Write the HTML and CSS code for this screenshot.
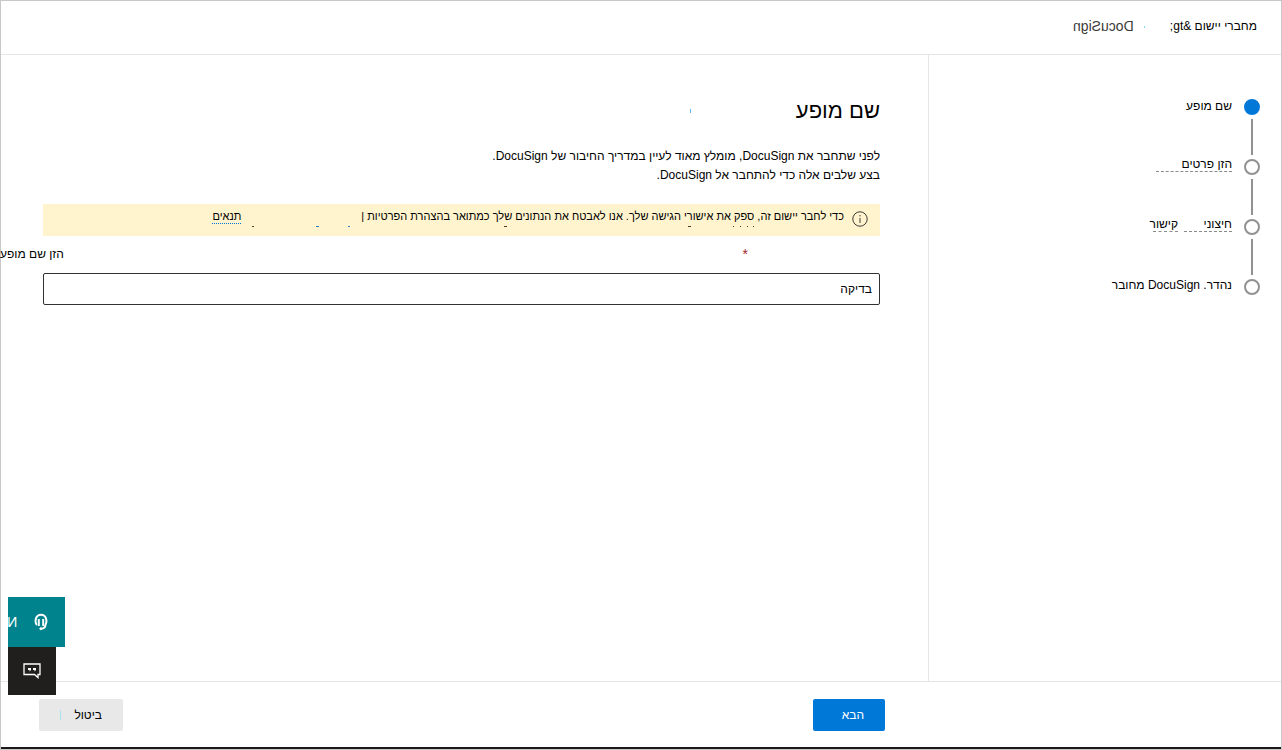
FILE: index.html
```html
<!DOCTYPE html>
<html lang="he" dir="rtl">
<head>
<meta charset="utf-8">
<title>DocuSign</title>
<link rel="stylesheet" href="styles.css">
</head>
<body>
<div class="page">
  <header class="header">
    <span class="crumb">מחברי יישום &amp;gt;</span>
    <span class="tick tick-dot"></span>
    <span class="product mirrored" dir="ltr">DocuSign</span>
  </header>
  <div class="body">
    <nav class="sidebar">
      <ol class="steps">
        <li class="step current"><span class="marker"></span><span class="step-name">שם מופע</span></li>
        <li class="step"><span class="marker"></span><span class="step-name trace">הזן פרטים</span></li>
        <li class="step"><span class="marker"></span><span class="step-name trace">חיצוני</span><span class="step-name trace trace-short">קישור</span></li>
        <li class="step"><span class="marker"></span><span class="step-name connected">נהדר. DocuSign מחובר</span></li>
      </ol>
    </nav>
    <main class="main">
      <div class="title-row">
        <h1 class="title">שם מופע</h1>
        <span class="tick tick-title"></span>
      </div>
      <p class="intro">לפני שתחבר את DocuSign, מומלץ מאוד לעיין במדריך החיבור של DocuSign.<br>בצע שלבים אלה כדי להתחבר אל DocuSign.</p>
      <div class="notice">
        <svg class="info" viewBox="0 0 16 16" fill="none" stroke="#3b3a39"><circle cx="8" cy="8" r="7.2"/><path d="M8 7v5M8 4v1.4"/></svg>
        <span class="notice-text">כדי לחבר יישום זה, ספק את אישורי הגישה שלך. אנו לאבטח את הנתונים שלך כמתואר בהצהרת הפרטיות |</span>
        <a class="terms" href="#terms">תנאים</a>
        <svg class="marks" viewBox="0 0 680 4" fill="none"><path stroke="#4a4030" d="M488 1.500h3M533 1.500h1M540 1.500h1M547 1.500h1M553 1.500h1M304 1.500h3M52 1.500h2"/><path stroke="#2b7bc0" d="M116 1.500h3M148 1.500h2"/></svg>
      </div>
      <div class="label-row">
        <span class="required">*</span>
        <label for="instance">הזן שם מופע</label>
      </div>
      <input class="field" id="instance" type="text" value="בדיקה">
    </main>
  </div>
  <footer class="footer">
    <div class="actions">
      <button class="button primary" type="button">הבא</button>
      <button class="button cancel" type="button">ביטול<span class="tick tick-button"></span></button>
    </div>
  </footer>
  <div class="help">
    <button class="help-button support" type="button" aria-label="Support">
      <svg class="headset" viewBox="0 0 14 18" fill="none" stroke="#fff"><path stroke-width="2" d="M3 12C1.300 11 1.300 7 2 5.500 3 2 5 1.700 7 1.700s4 .3 5 3.800c.7 1.500.7 5.500-1 6.500"/><path stroke-width="2" d="M4.800 6v7M9.200 6v7"/><path stroke-width="2" d="M11.500 11.500c0 2.500-1.500 4-4.500 4.300"/><circle cx="6.800" cy="15.700" r="1" fill="#fff"/></svg>
      <span class="letter mirrored">N</span>
    </button>
    <button class="help-button chat" type="button" aria-label="Feedback">
      <svg class="bubble" viewBox="0 0 18 16" fill="none" stroke="#fff" stroke-width="1.300"><path d="M1 1h16v10.500h-2v3l-3.500-3H1z"/><path fill="#fff" stroke="none" d="M5 5h3v2L6.500 8.500V7H5zM10 5h3v2l-1.500 1.500V7H10z"/></svg>
    </button>
  </div>
</div>
</body>
</html>
```
FILE: styles.css
```css
* { box-sizing: border-box; }
body {
  margin: 0;
  background: #fff;
  color: #000;
  font: 12px/19px "Liberation Sans", Arial, sans-serif;
}
button, input { font: inherit; }
.page {
  position: relative;
  display: flex;
  flex-direction: column;
  min-height: 100vh;
  border: 1px solid #c8c8c8;
}
.header {
  display: flex;
  align-items: center;
  height: 54px;
  padding: 0 24px 2px;
  border-bottom: 1px solid #e6e6e6;
}
.product { font-size: 14px; color: #3b3a39; margin-right: 10px; }
.mirrored { display: inline-block; transform: scaleX(-1); }
.tick { display: block; width: 1px; background: #8fd3f5; }
.tick-dot { height: 2px; margin-right: 25px; }
.tick-title { height: 4px; margin-right: 105px; background: #63b8f0; }
.tick-button { height: 10px; margin-right: 13px; background: #a6e3ea; }
.body { display: flex; flex: 1; }
.sidebar {
  flex: 0 0 353px;
  padding: 44px 21px 0 0;
  border-left: 1px solid #e6e6e6;
}
.steps { margin: 0; padding: 0; list-style: none; }
.step {
  position: relative;
  display: flex;
  height: 60px;
}
.marker {
  width: 16px;
  height: 16px;
  margin-left: 12px;
  border: 2px solid #919191;
  border-radius: 50%;
}
.current .marker { background: #0078d7; border-color: #0078d7; }
.step:not(:last-child)::after {
  content: "";
  position: absolute;
  top: 20px;
  right: 7px;
  width: 2px;
  height: 36px;
  background: #919191;
}
.step-name { height: 14px; line-height: 14px; }
.connected { line-height: 12px; }
.trace {
  width: 76px;
  height: 13px;
  line-height: 10px;
  border-bottom: 1px dashed #8a8a8a;
}
.trace:not(:last-child) { width: 48px; }
.trace-short { width: 25px; margin-right: 6px; }
.main { flex: 1; min-width: 0; padding: 40px 48px 0 42px; }
.title-row { display: flex; align-items: center; }
.title { margin: 0; font-size: 22px; line-height: 32px; font-weight: 400; }
.intro { margin: 20px 0 0; }
.notice {
  position: relative;
  display: flex;
  height: 32px;
  margin-top: 19px;
  padding: 0 12px;
  background: #fff4ce;
}
.info { width: 16px; height: 16px; margin: 7px 0 0 8px; }
.notice-text, .terms { font-size: 11px; line-height: 25px; white-space: nowrap; }
.terms {
  height: 20px;
  margin-right: 120px;
  border-bottom: 1px dotted #0078d7;
  color: inherit;
  text-decoration: none;
}
.marks { position: absolute; top: 21px; right: 0; width: 680px; height: 4px; }
.label-row {
  display: flex;
  justify-content: space-between;
  margin: 9px 0 0 -42px;
  padding-right: 132px;
}
.label-row label { margin-left: -1px; }
.required { color: #a4262c; font-size: 14px; }
.field {
  display: block;
  width: 100%;
  height: 32px;
  margin-top: 9px;
  padding: 0 7px;
  border: 1px solid #323130;
  border-radius: 2px;
  background: #fff;
  color: #000;
}
.footer {
  height: 68px;
  border-top: 1px solid #e6e6e6;
  border-bottom: 2px solid #1b1a19;
}
.actions {
  display: flex;
  justify-content: space-between;
  padding: 17px 396px 0 38px;
}
.button {
  display: flex;
  align-items: center;
  height: 32px;
  padding: 0 21px;
  border: 0;
  border-radius: 2px;
}
.primary { width: 72px; background: #0078d7; color: #fff; }
.cancel { width: 84px; background: #e8e8e8; color: #000; }
.help {
  position: absolute;
  left: 7px;
  bottom: 54px;
  display: flex;
  flex-direction: column;
  align-items: flex-end;
}
.help-button { display: flex; align-items: center; border: 0; color: #fff; overflow: hidden; }
.support { width: 57px; height: 50px; padding: 0 17px 0 0; background: #00838c; }
.headset { flex: none; width: 14px; height: 18px; }
.letter { flex: none; margin-right: 17px; font-size: 14px; }
.chat { width: 48px; height: 48px; padding: 0 15px; background: #201f1e; }
.bubble { flex: none; width: 18px; height: 16px; }
```
